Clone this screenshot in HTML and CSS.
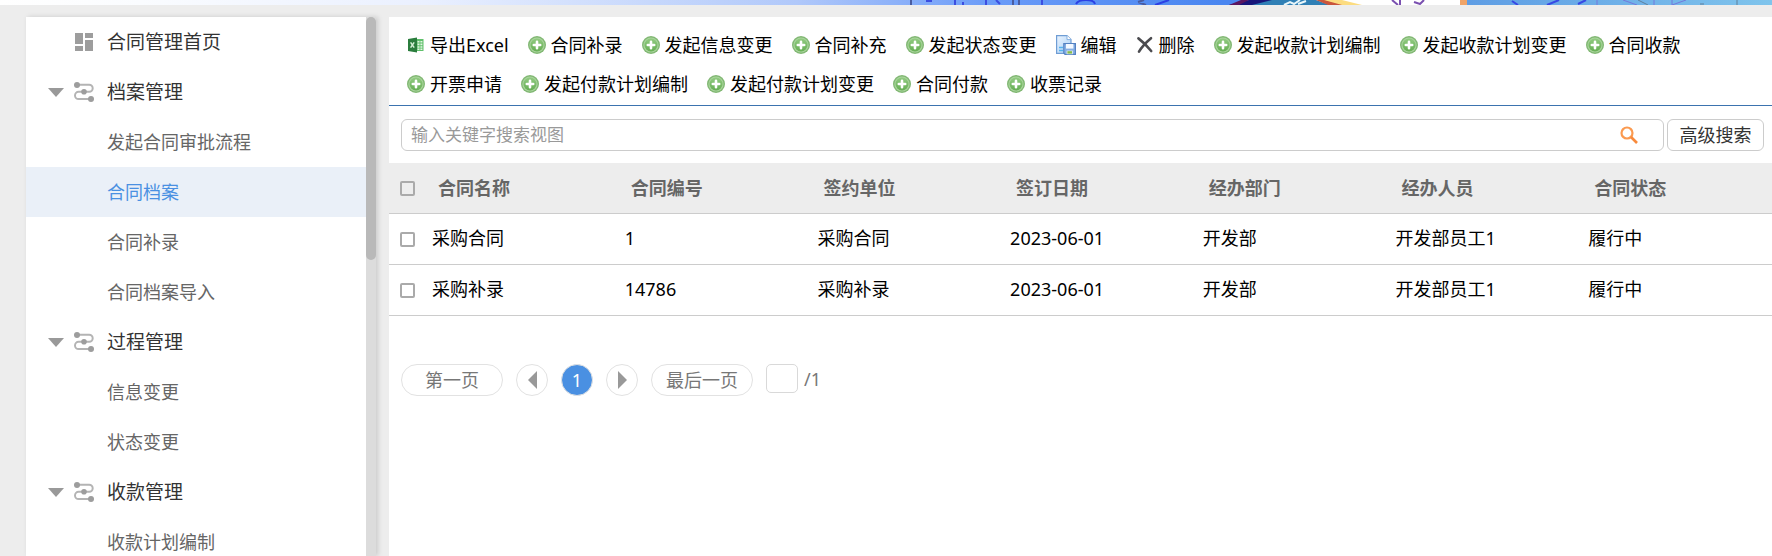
FILE: index.html
```html
<!DOCTYPE html>
<html lang="zh-CN">
<head>
<meta charset="utf-8">
<meta name="viewport" content="width=device-width, initial-scale=1">
<title>合同管理</title>
<link rel="stylesheet" href="styles.css">
</head>
<body>
<svg width="0" height="0" class="sprite" aria-hidden="true">
  <defs>
    <linearGradient id="green" x1="0" y1="0" x2="0" y2="1"><stop offset="0" stop-color="#92cb82"/><stop offset="1" stop-color="#66ae54"/></linearGradient>
    <linearGradient id="paper" x1="0" y1="0" x2="1" y2="1"><stop offset="0" stop-color="#eaf4ff"/><stop offset="1" stop-color="#a9cff5"/></linearGradient>
    <symbol id="add" viewBox="0 0 18 18">
      <circle cx="9" cy="9" r="9" fill="#82b874"/>
      <circle cx="9" cy="9" r="7.6" fill="#a9d49c"/>
      <circle cx="9" cy="9" r="6.5" fill="url(#green)"/>
      <path d="M9 5.800v6.400M5.800 9h6.400" stroke="#fff" stroke-width="2.600" stroke-linecap="round"/>
    </symbol>
    <symbol id="excel" viewBox="0 0 18 18">
      <path d="M9 3h7.5v12H9z" fill="#5fc06b"/>
      <path d="M10.5 5h2v1.6h-2zM13.4 5h2v1.6h-2zM10.5 7.6h2v1.6h-2zM13.4 7.6h2v1.6h-2zM10.5 10.2h2v1.6h-2zM13.4 10.2h2v1.6h-2zM10.5 12.6h2v1.4h-2zM13.4 12.6h2v1.4h-2z" fill="#e4f6e4"/>
      <path d="M1 3l9-1.6v15.2L1 15z" fill="#2b7d3d"/>
      <path d="M3.6 6.4l3.6 5.2M7.2 6.4l-3.6 5.2" stroke="#d6f0d6" stroke-width="1.5"/>
    </symbol>
    <symbol id="edit" viewBox="0 0 20 20">
      <path d="M.6.6H11l4 4v13.8H.6z" fill="url(#paper)" stroke="#6f9dd4" stroke-width="1.2"/>
      <path d="M11 .6v4h4" fill="#fff" stroke="#86b0e0"/>
      <path d="M3 12.5h4M3 15.5h4" stroke="#54b4ee" stroke-width="1.4"/>
      <path d="M7.8 8.6h11.6v10.8H9L7.8 18z" fill="#86afe4" stroke="#5582c2" stroke-width="1.2"/>
      <path d="M10 9h7.4v4.6H10z" fill="#f4f9ff"/>
      <path d="M10.6 15.6h6.2v3.6h-6.2z" fill="#e6eef0"/>
      <path d="M11.4 16.2h4.6v2.4h-4.6z" fill="#86bb4c"/>
    </symbol>
    <symbol id="delete" viewBox="0 0 18 18">
      <path d="M2.4 2.4c4 3 9 8 12.800 12.600M15 2.200C10.500 6 6 10.500 3 15.600" fill="none" stroke="#4b4b4f" stroke-width="2.600" stroke-linecap="round"/>
    </symbol>
    <symbol id="home" viewBox="0 0 18 18">
      <path d="M0 0h8v11H0zM10 0h8v5h-8zM10 7h8v11h-8zM0 13h8v5H0z" fill="#9d9d9d"/>
    </symbol>
    <symbol id="flow" viewBox="0 0 20 20">
      <path d="M3 2.800h12.200a3.400 3.400 0 0 1 0 7H4.600a3.600 3.600 0 0 0 0 7.200H17" fill="none" stroke="#b4b4b4" stroke-width="2"/>
      <circle cx="3" cy="3" r="3" fill="#9d9d9d"/><circle cx="10" cy="9.800" r="2.800" fill="#9d9d9d"/><circle cx="17" cy="17" r="3" fill="#9d9d9d"/>
    </symbol>
    <symbol id="caret" viewBox="0 0 16 9"><path d="M0 0h16L8 9z" fill="#999"/></symbol>
    <symbol id="left" viewBox="0 0 9 18"><path d="M9 0v18L0 9z" fill="#999"/></symbol>
    <symbol id="right" viewBox="0 0 9 18"><path d="M0 0v18l9-9z" fill="#999"/></symbol>
    <symbol id="search" viewBox="0 0 18 18"><circle cx="7" cy="7" r="5.500" fill="none" stroke="#fb9a50" stroke-width="2.200"/><path d="M11 11l6 6" stroke="#f88a3c" stroke-width="2.600"/></symbol>
  </defs>
</svg>

<header class="banner">
  <svg class="banner-art" viewBox="0 0 1772 5" preserveAspectRatio="none" aria-hidden="true">
    <defs>
      <linearGradient id="sky"><stop offset="0" stop-color="#fff"/><stop offset=".08" stop-color="#fafcff"/><stop offset=".24" stop-color="#eaf0ff"/><stop offset=".45" stop-color="#b0c8fa"/><stop offset=".56" stop-color="#6a9bf8"/><stop offset=".69" stop-color="#4a86f0"/></linearGradient>
      <linearGradient id="sea"><stop offset="0" stop-color="#5f9de4"/><stop offset="1" stop-color="#7fc4ec"/></linearGradient>
    </defs>
    <rect width="1772" height="5" fill="url(#sky)"/>
    <path d="M1229 5l20-5h82v5z" fill="#17157a"/>
    <path d="M1252 5l20-5h70v5z" fill="#2f7fb5"/>
    <path d="M1229 5l12-5h8l-10 5z" fill="#5a1560"/>
    <path d="M1284 5l6-3 4 2 6-4M1298 4l8-3" stroke="#e8f6fa" stroke-width="2" fill="none"/>
    <path d="M1316 0h144v5h-130z" fill="#fff"/>
    <path d="M1316 0h10l20 5h-18z" fill="#c9553c"/>
    <path d="M1324 0h18l20 5h-20z" fill="#fcdc80"/>
    <path d="M1392 0l6 5M1400 0v5M1414 2l6 2 4-4" stroke="#7a50b0" stroke-width="2" fill="none"/>
    <rect x="1460" width="7" height="5" fill="#f0a468"/>
    <rect x="1467" width="305" height="5" fill="url(#sea)"/>
    <path d="M926 1h6M955 0v5M963 2v3M986 0v5M996 0l4 4M1042 0v5" stroke="#3c4ee0" stroke-width="2" fill="none"/>
    <path d="M911 0v5M1013 0v5M1019 0v5M1138 2l8 3M1138 2l6-2" stroke="#4a5ca0" stroke-width="2" fill="none"/>
    <path d="M1076 4q2-4 10-4t9 4M1155 5l14-5" stroke="#2c40e4" stroke-width="2" fill="none"/>
    <path d="M1512 1l6 4M1547 5l12-5M1586 0l-8 4" stroke="#3848e4" stroke-width="2" fill="none"/>
    <path d="M1597 0v5M1623 0l14 5M1654 0v5M1672 0v5l14-5" stroke="#7478dc" stroke-width="1" fill="none"/>
    <path d="M1638 0l10 5M1700 4h4M1737 0v5" stroke="#60809c" stroke-width="1" fill="none"/>
  </svg>
</header>

<div class="layout">
  <aside class="sidebar">
    <nav class="menu" aria-label="合同管理">
      <a class="menu-item group" href="#"><span class="arrow"></span><svg class="menu-icon home"><use href="#home"/></svg>合同管理首页</a>
      <a class="menu-item group" href="#"><svg class="arrow"><use href="#caret"/></svg><svg class="menu-icon"><use href="#flow"/></svg>档案管理</a>
      <a class="menu-item" href="#">发起合同审批流程</a>
      <a class="menu-item active" href="#" aria-current="page">合同档案</a>
      <a class="menu-item" href="#">合同补录</a>
      <a class="menu-item" href="#">合同档案导入</a>
      <a class="menu-item group" href="#"><svg class="arrow"><use href="#caret"/></svg><svg class="menu-icon"><use href="#flow"/></svg>过程管理</a>
      <a class="menu-item" href="#">信息变更</a>
      <a class="menu-item" href="#">状态变更</a>
      <a class="menu-item group" href="#"><svg class="arrow"><use href="#caret"/></svg><svg class="menu-icon"><use href="#flow"/></svg>收款管理</a>
      <a class="menu-item" href="#">收款计划编制</a>
    </nav>
    <div class="scroll-track"><div class="scroll-thumb"></div></div>
  </aside>

  <main class="content">
    <div class="toolbar">
      <button class="tool" type="button"><svg><use href="#excel"/></svg>导出Excel</button>
      <button class="tool" type="button"><svg><use href="#add"/></svg>合同补录</button>
      <button class="tool" type="button"><svg><use href="#add"/></svg>发起信息变更</button>
      <button class="tool" type="button"><svg><use href="#add"/></svg>合同补充</button>
      <button class="tool" type="button"><svg><use href="#add"/></svg>发起状态变更</button>
      <button class="tool" type="button"><svg class="wide"><use href="#edit"/></svg>编辑</button>
      <button class="tool" type="button"><svg><use href="#delete"/></svg>删除</button>
      <button class="tool" type="button"><svg><use href="#add"/></svg>发起收款计划编制</button>
      <button class="tool" type="button"><svg><use href="#add"/></svg>发起收款计划变更</button>
      <button class="tool" type="button"><svg><use href="#add"/></svg>合同收款</button>
      <button class="tool" type="button"><svg><use href="#add"/></svg>开票申请</button>
      <button class="tool" type="button"><svg><use href="#add"/></svg>发起付款计划编制</button>
      <button class="tool" type="button"><svg><use href="#add"/></svg>发起付款计划变更</button>
      <button class="tool" type="button"><svg><use href="#add"/></svg>合同付款</button>
      <button class="tool" type="button"><svg><use href="#add"/></svg>收票记录</button>
    </div>

    <form class="search">
      <div class="search-box">
        <input type="text" placeholder="输入关键字搜索视图" aria-label="搜索视图">
        <button class="search-go" type="button" aria-label="搜索"><svg><use href="#search"/></svg></button>
      </div>
      <button class="advanced" type="button">高级搜索</button>
    </form>

    <table class="grid">
      <thead>
        <tr><th class="pick"><input type="checkbox" aria-label="全选"></th><th>合同名称</th><th>合同编号</th><th>签约单位</th><th>签订日期</th><th>经办部门</th><th>经办人员</th><th>合同状态</th></tr>
      </thead>
      <tbody>
        <tr><td class="pick"><input type="checkbox" aria-label="选择采购合同"></td><td>采购合同</td><td>1</td><td>采购合同</td><td>2023-06-01</td><td>开发部</td><td>开发部员工1</td><td>履行中</td></tr>
        <tr><td class="pick"><input type="checkbox" aria-label="选择采购补录"></td><td>采购补录</td><td>14786</td><td>采购补录</td><td>2023-06-01</td><td>开发部</td><td>开发部员工1</td><td>履行中</td></tr>
      </tbody>
    </table>

    <nav class="pager" aria-label="分页">
      <button class="page-end" type="button">第一页</button>
      <button class="page-step" type="button" aria-label="上一页"><svg><use href="#left"/></svg></button>
      <button class="page-step current" type="button" aria-current="page">1</button>
      <button class="page-step" type="button" aria-label="下一页"><svg><use href="#right"/></svg></button>
      <button class="page-end" type="button">最后一页</button>
      <label class="page-jump"><input type="text" aria-label="页码">/1</label>
    </nav>
  </main>
</div>
</body>
</html>
```
FILE: styles.css
```css
* { box-sizing: border-box; }

body {
  margin: 0;
  height: 100vh;
  display: flex;
  flex-direction: column;
  overflow: hidden;
  background: #ededed;
  color: #000;
  font: 400 18px/24px "Noto Sans", "Noto Sans CJK SC", sans-serif;
}

button, input {
  margin: 0;
  padding: 0;
  font: inherit;
  color: inherit;
}

button {
  border: 0;
  background: none;
  cursor: pointer;
}

.sprite { position: absolute; }

.banner { flex: none; height: 5px; }
.banner-art { display: block; width: 100%; height: 5px; }

.layout {
  flex: 1;
  min-height: 0;
  display: flex;
  gap: 13px;
  padding: 12px 0 0 26px;
}

/* Sidebar */
.sidebar {
  flex: none;
  width: 350px;
  display: flex;
  background: #fff;
  box-shadow: 2px 0 5px rgba(0, 0, 0, .15);
}

.menu { flex: 1; overflow: hidden; }

.menu-item {
  display: flex;
  align-items: center;
  height: 50px;
  padding-left: 81px;
  color: #666;
  text-decoration: none;
}

.menu-item.active { background: #eaf0f8; color: #4a90e2; }

.menu-item.group {
  padding-left: 22px;
  color: #333;
  font-size: 19px;
}

.arrow { width: 16px; height: 9px; margin-right: 10px; }
.menu-icon { width: 20px; height: 20px; margin-right: 13px; }
.menu-icon.home { padding: 1px; }

.scroll-track { width: 10px; background: #dcdcdc; }
.scroll-thumb { height: 45%; border-radius: 5px; background: #b9b9b9; }

/* Content */
.content { flex: 1; min-width: 0; background: #fff; }

.toolbar {
  display: flex;
  flex-wrap: wrap;
  column-gap: 19px;
  padding: 8px 18px 2px;
  border-bottom: 1px solid #3b73af;
}

.tool {
  display: flex;
  align-items: center;
  gap: 5px;
  height: 39px;
  white-space: nowrap;
}

.tool svg { width: 18px; height: 18px; }
.tool svg.wide { width: 20px; height: 20px; }

.search {
  display: flex;
  gap: 3px;
  padding: 13px 8px 12px 12px;
}

.search-box {
  flex: 1;
  display: flex;
  height: 32px;
  border: 1px solid #ccc;
  border-radius: 6px;
}

.search-box input {
  flex: 1;
  min-width: 0;
  padding: 0 9px;
  border: 0;
  outline: 0;
  background: none;
  font-size: 17px;
}

.search-box input::placeholder { color: #999; opacity: 1; }

.search-go { width: 68px; display: grid; place-items: center; }
.search-go svg { width: 18px; height: 18px; }

.advanced {
  width: 97px;
  height: 32px;
  border: 1px solid #ccc;
  border-radius: 6px;
  color: #333;
}

.grid {
  width: 100%;
  border-collapse: separate;
  border-spacing: 0;
  table-layout: fixed;
}

.grid th, .grid td {
  height: 51px;
  padding: 0 0 2px 9px;
  border-bottom: 1px solid #ccc;
  text-align: left;
}

.grid th {
  padding: 0 0 0 15px;
  background: #ededed;
  color: #666;
  font-weight: 700;
}

.grid .pick { width: 34px; padding: 0 0 0 11px; }

.pick input {
  display: block;
  appearance: none;
  width: 15px;
  height: 15px;
  border: 2px solid #aaa;
  border-radius: 2px;
}

/* Pagination */
.pager {
  display: flex;
  gap: 13px;
  padding: 48px 12px 0;
  color: #777;
}

.page-end {
  width: 102px;
  height: 32px;
  border: 1px solid #e2e2e2;
  border-radius: 16px;
}

.page-step {
  width: 32px;
  height: 32px;
  display: grid;
  place-items: center;
  border: 1px solid #e2e2e2;
  border-radius: 50%;
}

.page-step svg { width: 9px; height: 18px; }
.page-step.current { background: #4a90e2; color: #fff; }

.page-jump {
  height: 29px;
  display: flex;
  align-items: center;
  gap: 6px;
}

.page-jump input {
  width: 32px;
  height: 29px;
  border: 1px solid #d9d9d9;
  border-radius: 5px;
}
```
